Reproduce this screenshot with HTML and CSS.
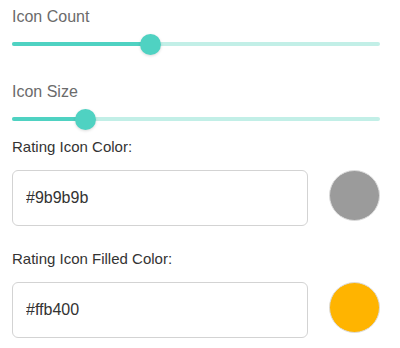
FILE: index.html
```html
<!DOCTYPE html>
<html lang="en">
<head>
    <meta charset="UTF-8">
    <meta name="viewport" content="width=device-width, initial-scale=1.0">
    <title>Rating Settings</title>
    <link rel="stylesheet" href="styles.css">
</head>
<body>
    <div class="settings">
        <div class="slider-group">
            <div class="slider-label">Icon Count</div>
            <div class="slider">
                <div class="slider-track">
                    <div class="slider-fill" style="width: 37.5%"></div>
                </div>
                <div class="slider-thumb" style="left: 37.5%"></div>
            </div>
        </div>

        <div class="slider-group">
            <div class="slider-label">Icon Size</div>
            <div class="slider">
                <div class="slider-track">
                    <div class="slider-fill" style="width: 20%"></div>
                </div>
                <div class="slider-thumb" style="left: 20%"></div>
            </div>
        </div>

        <div class="color-group">
            <label class="color-label" for="icon-color">Rating Icon Color:</label>
            <div class="color-row">
                <input class="color-input" id="icon-color" type="text" value="#9b9b9b">
                <div class="color-swatch" style="background-color: #9b9b9b"></div>
            </div>
        </div>

        <div class="color-group">
            <label class="color-label" for="filled-color">Rating Icon Filled Color:</label>
            <div class="color-row">
                <input class="color-input" id="filled-color" type="text" value="#ffb400">
                <div class="color-swatch" style="background-color: #ffb400"></div>
            </div>
        </div>
    </div>
</body>
</html>
```

FILE: styles.css
```css
* {
    margin: 0;
    padding: 0;
    box-sizing: border-box;
    font-family: 'Liberation Sans', Arial, sans-serif;
}

body {
    background-color: #fff;
}

.settings {
    width: 368px;
    margin-left: 12px;
    padding-top: 7px;
}

.slider-group {
    margin-bottom: 27px;
}

.slider-group + .slider-group {
    margin-bottom: 7px;
}

.slider-label {
    font-size: 16px;
    line-height: 20px;
    color: #6b6b6b;
    margin-bottom: 6px;
}

.slider {
    position: relative;
    height: 22px;
    display: flex;
    align-items: center;
}

.slider-track {
    width: 100%;
    height: 4px;
    border-radius: 2px;
    background-color: #c2efe7;
    overflow: hidden;
}

.slider-fill {
    height: 100%;
    background-color: #4fd2c2;
}

.slider-thumb {
    position: absolute;
    top: 0.5px;
    width: 21px;
    height: 21px;
    margin-left: -10.5px;
    border-radius: 50%;
    background-color: #4fd2c2;
    box-shadow: 0 1px 3px rgba(0, 0, 0, 0.15);
}

.color-group {
    margin-bottom: 23px;
}

.color-label {
    display: block;
    font-size: 15px;
    line-height: 20px;
    color: #333;
    margin-bottom: 13px;
}

.color-row {
    display: flex;
    align-items: flex-start;
    justify-content: space-between;
}

.color-input {
    width: 296px;
    height: 56px;
    padding: 0 13px;
    border: 1px solid #d3d3d3;
    border-radius: 6px;
    font-size: 16px;
    color: #333;
    background-color: #fff;
    outline: none;
}

.color-swatch {
    width: 51px;
    height: 51px;
    border-radius: 50%;
    border: 1px solid #dcdcdc;
}
```
